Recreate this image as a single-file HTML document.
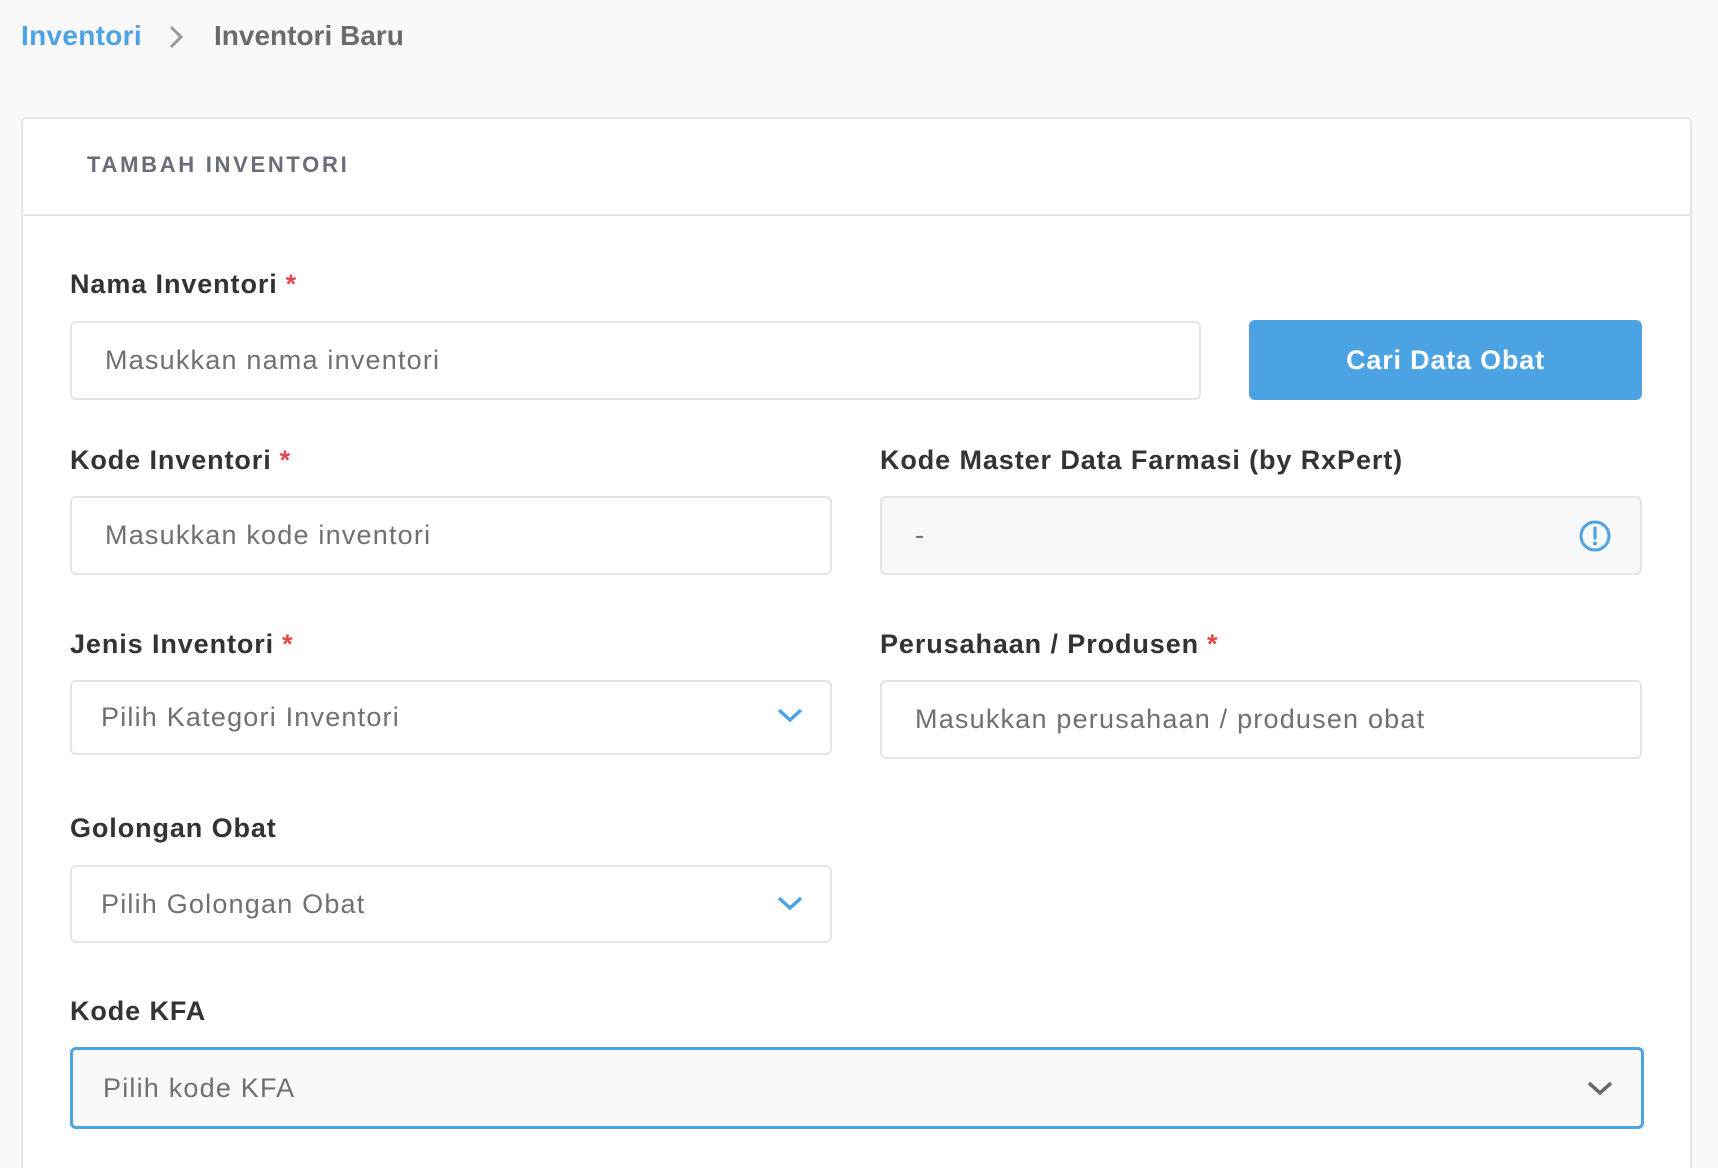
<!DOCTYPE html>
<html><head><meta charset="utf-8"><style>
*{box-sizing:border-box;margin:0;padding:0}
html,body{width:1718px;height:1168px;overflow:hidden}
body{background:#f9f9f9;font-family:"Liberation Sans",sans-serif;position:relative}
.a{position:absolute}
.bc{top:19px;font-size:28px;font-weight:bold;line-height:34px}
.card{left:21px;top:117px;width:1671px;height:1070px;background:#fff;border:2px solid #e6e6e6;border-radius:5px}
.hd{left:21px;top:214px;width:1671px;height:2px;background:#e6e6e6}
.lbl{font-size:27px;font-weight:bold;color:#333;line-height:30px;letter-spacing:0.9px}
.lbl b{color:#e04848;margin-left:8px}
.in{border:2px solid #e4e4e4;border-radius:6px;background:#fff;font-size:27px;letter-spacing:1.2px;color:#707070;display:flex;align-items:center}
</style></head><body>
<div class="a bc" style="left:21px;color:#4ba3e3;letter-spacing:0.3px">Inventori</div>
<svg class="a" style="left:166px;top:24px" width="20" height="26" viewBox="0 0 20 26"><path d="M5 3l10 10-10 10" fill="none" stroke="#999" stroke-width="3"/></svg>
<div class="a bc" style="left:214px;color:#6b6b6b">Inventori Baru</div>
<div class="a card"></div>
<div class="a hd"></div>
<div class="a" style="left:87px;top:152px;font-size:22px;font-weight:bold;color:#676e79;letter-spacing:2.7px">TAMBAH INVENTORI</div>

<div class="a lbl" style="left:70px;top:269px">Nama Inventori<b>*</b></div>
<div class="a in" style="left:70px;top:321px;width:1131px;height:79px;padding-left:33px">Masukkan nama inventori</div>
<div class="a" style="left:1249px;top:320px;width:393px;height:80px;background:#4ba3e3;border-radius:6px;color:#fff;font-size:27px;font-weight:bold;letter-spacing:0.8px;display:flex;align-items:center;justify-content:center">Cari Data Obat</div>

<div class="a lbl" style="left:70px;top:445px">Kode Inventori<b>*</b></div>
<div class="a in" style="left:70px;top:496px;width:762px;height:79px;padding-left:33px">Masukkan kode inventori</div>
<div class="a lbl" style="left:880px;top:445px">Kode Master Data Farmasi (by RxPert)</div>
<div class="a in" style="left:880px;top:496px;width:762px;height:79px;padding-left:33px;background:#f8f8f8">-</div>
<svg class="a" style="left:1578px;top:519px" width="34" height="34" viewBox="0 0 34 34"><circle cx="17" cy="17" r="14" fill="none" stroke="#4ba3e3" stroke-width="3"/><path d="M17 9v10" stroke="#4ba3e3" stroke-width="3.2" stroke-linecap="round"/><circle cx="17" cy="24.5" r="2" fill="#4ba3e3"/></svg>

<div class="a lbl" style="left:70px;top:629px">Jenis Inventori<b>*</b></div>
<div class="a in" style="left:70px;top:680px;width:762px;height:75px;padding-left:29px">Pilih Kategori Inventori</div>
<svg class="a" style="left:777px;top:707px" width="26" height="16" viewBox="0 0 26 16"><path d="M2 3l11 10 11-10" fill="none" stroke="#4ba3e3" stroke-width="3.5"/></svg>
<div class="a lbl" style="left:880px;top:629px">Perusahaan / Produsen<b>*</b></div>
<div class="a in" style="left:880px;top:680px;width:762px;height:79px;padding-left:33px">Masukkan perusahaan / produsen obat</div>

<div class="a lbl" style="left:70px;top:813px">Golongan Obat</div>
<div class="a in" style="left:70px;top:865px;width:762px;height:78px;padding-left:29px">Pilih Golongan Obat</div>
<svg class="a" style="left:777px;top:895px" width="26" height="16" viewBox="0 0 26 16"><path d="M2 3l11 10 11-10" fill="none" stroke="#4ba3e3" stroke-width="3.5"/></svg>

<div class="a lbl" style="left:70px;top:996px">Kode KFA</div>
<div class="a in" style="left:70px;top:1047px;width:1574px;height:82px;padding-left:30px;border:3px solid #4ba3e3;background:#f9f9f9">Pilih kode KFA</div>
<svg class="a" style="left:1587px;top:1080px" width="26" height="16" viewBox="0 0 26 16"><path d="M2 3l11 10 11-10" fill="none" stroke="#666" stroke-width="3.5"/></svg>
</body></html>
